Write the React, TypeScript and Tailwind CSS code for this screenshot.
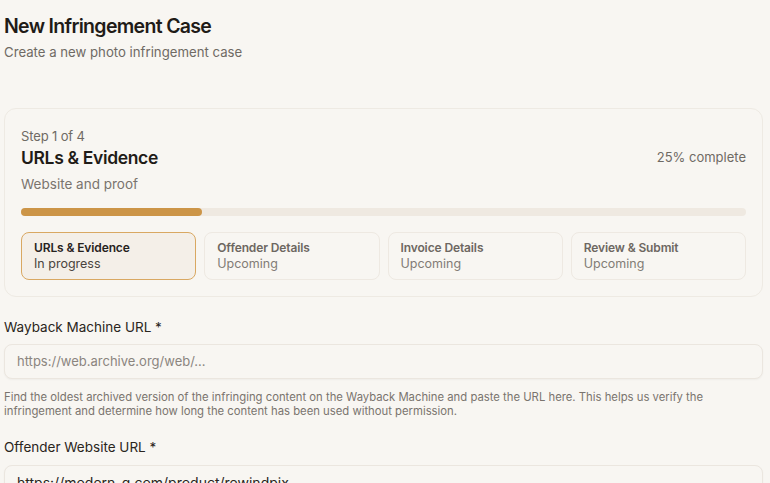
import React from "react";

const steps = [
  { title: "URLs & Evidence", status: "In progress", active: true },
  { title: "Offender Details", status: "Upcoming", active: false },
  { title: "Invoice Details", status: "Upcoming", active: false },
  { title: "Review & Submit", status: "Upcoming", active: false },
];

function StepCard({ title, status, active }: { title: string; status: string; active: boolean }) {
  return (
    <div
      className={
        active
          ? "rounded-lg border border-[#d9a862] bg-[#f4efe8] px-3 py-[7px]"
          : "rounded-lg border border-[#eee9e2] bg-[#f8f6f2] px-3 py-[7px]"
      }
    >
      <div
        className={
          active
            ? "text-[12px] font-semibold leading-4 tracking-[-0.01em] text-[#27221d]"
            : "text-[12px] font-semibold leading-4 tracking-[-0.01em] text-[#6d6761]"
        }
      >
        {title}
      </div>
      <div className={active ? "text-[12.5px] leading-4 text-[#4a443e]" : "text-[12.5px] leading-4 text-[#827c76]"}>
        {status}
      </div>
    </div>
  );
}

export default function App() {
  return (
    <div className="min-h-screen bg-[#f8f6f2] pl-1 pr-[7px] pt-3 font-['Inter',sans-serif] text-[#1f1b17]">
      <h1 className="text-[19.5px] font-semibold leading-7 tracking-[-0.035em]">New Infringement Case</h1>
      <p className="mt-0.5 text-[13.2px] leading-5 text-[#6f6a64]">Create a new photo infringement case</p>

      <section className="mt-[46px] rounded-xl border border-[#eeeae3] p-4">
        <div className="pt-px text-[13px] leading-5 tracking-[-0.01em] text-[#6f6a64]">Step 1 of 4</div>
        <div className="flex items-center justify-between">
          <h2 className="text-[17.5px] font-semibold leading-6 tracking-[-0.02em]">URLs &amp; Evidence</h2>
          <span className="text-[13px] text-[#6f6a64]">25% complete</span>
        </div>
        <div className="mt-1 text-[13.5px] leading-5 text-[#7a746e]">Website and proof</div>

        <div className="mt-[14px] h-2 w-full rounded-full bg-[#efe9e1]">
          <div className="h-2 rounded-full bg-[#cc9548]" style={{ width: "25%" }} />
        </div>

        <div className="mt-4 grid grid-cols-4 gap-2">
          {steps.map((s) => (
            <StepCard key={s.title} {...s} />
          ))}
        </div>
      </section>

      <label className="mt-5 block text-[13.5px] leading-5 text-[#2a2520]">Wayback Machine URL *</label>
      <div className="mt-[7px] flex h-[35px] items-center rounded-lg border border-[#ebe6df] bg-[#f8f6f2] px-3 shadow-[0_1px_2px_rgba(0,0,0,0.04)]">
        <span className="text-[13px] text-[#8b857f]">https://web.archive.org/web/...</span>
      </div>
      <p className="mt-[11px] text-[11.3px] leading-[14px] text-[#7a746e]">
        Find the oldest archived version of the infringing content on the Wayback Machine and paste the URL here. This helps us verify the
        <br />
        infringement and determine how long the content has been used without permission.
      </p>

      <label className="mt-[19px] block text-[13.5px] leading-5 text-[#2a2520]">Offender Website URL *</label>
      <div className="mt-2 flex h-[35px] items-center rounded-lg border border-[#ebe6df] bg-[#f8f6f2] px-3 shadow-[0_1px_2px_rgba(0,0,0,0.04)]">
        <span className="text-[14px] text-[#2a2520]">https://modern-g.com/product/rewindpix</span>
      </div>
    </div>
  );
}
